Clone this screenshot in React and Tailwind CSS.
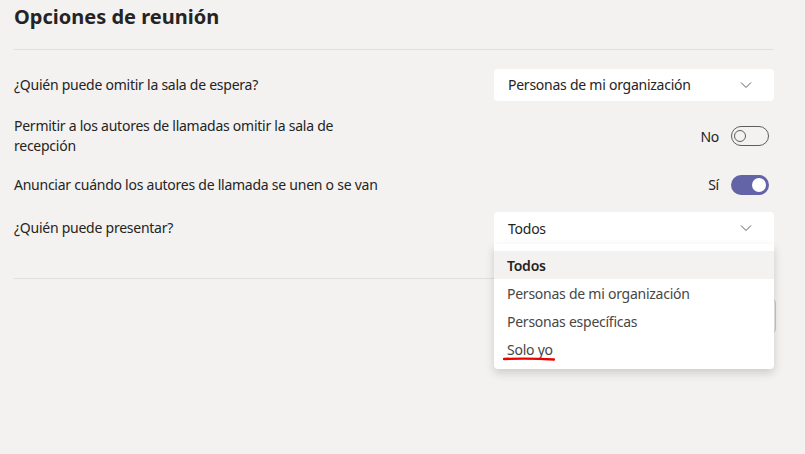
import React from "react";

function Chevron() {
  return (
    <svg width="12" height="8" viewBox="0 0 12 8" fill="none">
      <path d="M1 1.5 L6 6.5 L11 1.5" stroke="#605e5c" strokeWidth="1" />
    </svg>
  );
}

function ToggleOff() {
  return (
    <div className="flex h-[20px] w-[38px] items-center rounded-full border border-[#605e5c] bg-transparent px-[2px]">
      <div className="h-[12px] w-[12px] rounded-full border border-[#605e5c]" />
    </div>
  );
}

function ToggleOn() {
  return (
    <div className="flex h-[20px] w-[38px] items-center justify-end rounded-full bg-[#6264a7] px-[3px]">
      <div className="h-[14px] w-[14px] rounded-full bg-white" />
    </div>
  );
}

export default function App() {
  const font = { fontFamily: '"Segoe UI", "Noto Sans", sans-serif' };
  return (
    <div
      className="h-[454px] w-[805px] overflow-hidden bg-[#f3f2f1] pl-[14px] pr-[31px] text-[14px] tracking-[-0.25px] text-[#252423]"
      style={font}
    >
      <h1 className="pt-[3px] text-[20px] font-bold leading-[28px] tracking-normal text-[#252423]">
        Opciones de reunión
      </h1>
      <div className="mt-[18px] h-px bg-[#e1dfdd]" />

      <div className="mt-[19px] flex h-[32px] items-center justify-between">
        <span className="leading-[20px]">¿Quién puede omitir la sala de espera?</span>
        <div className="flex h-[32px] w-[280px] items-center justify-between rounded-[4px] bg-white pl-[14px] pr-[22px]">
          <span className="-mt-px">Personas de mi organización</span>
          <Chevron />
        </div>
      </div>

      <div className="mt-[15px] flex items-center justify-between">
        <span className="w-[360px] leading-[20px]">
          Permitir a los autores de llamadas omitir la sala de recepción
        </span>
        <div className="mr-[5px] flex items-center gap-[12px]">
          <span>No</span>
          <ToggleOff />
        </div>
      </div>

      <div className="mt-[18px] flex items-center justify-between">
        <span className="leading-[20px]">Anunciar cuándo los autores de llamada se unen o se van</span>
        <div className="mr-[5px] flex items-center gap-[12px]">
          <span>Sí</span>
          <ToggleOn />
        </div>
      </div>

      <div className="mt-[17px] flex h-[32px] items-center justify-between">
        <span className="leading-[20px]">¿Quién puede presentar?</span>
        <div className="relative z-10 w-[280px]">
          <div className="flex h-[32px] items-center justify-between rounded-t-[4px] bg-white pl-[14px] pr-[22px]">
            <span>Todos</span>
            <Chevron />
          </div>
          <div className="absolute left-0 top-[32px] w-[280px] rounded-b-[4px] bg-white pb-[6px] pt-[7px] text-[#484644] shadow-[0_4px_10px_rgba(0,0,0,0.16)]">
            <div className="flex h-[28px] items-center bg-[#f3f2f1] pl-[13px] font-semibold text-[#252423]">
              Todos
            </div>
            <div className="flex h-[28px] items-center pl-[13px]">Personas de mi organización</div>
            <div className="flex h-[28px] items-center pl-[13px]">Personas específicas</div>
            <div className="relative flex h-[28px] items-center pl-[13px]">
              Solo yo
              <svg
                className="absolute left-[9px] top-[21px]"
                width="52"
                height="6"
                viewBox="0 0 52 6"
                fill="none"
              >
                <path d="M1 3 Q26 2 51 3.5" stroke="#ee0000" strokeWidth="2.4" strokeLinecap="round" />
              </svg>
            </div>
          </div>
        </div>
      </div>

      <div className="mt-[34px] h-px bg-[#e1dfdd]" />
      <div className="mt-[20px] flex justify-end">
        <div className="-mr-[2px] h-[34px] w-[90px] rounded-[4px] border border-[#c8c6c4] bg-[#edebe9]" />
      </div>
    </div>
  );
}
